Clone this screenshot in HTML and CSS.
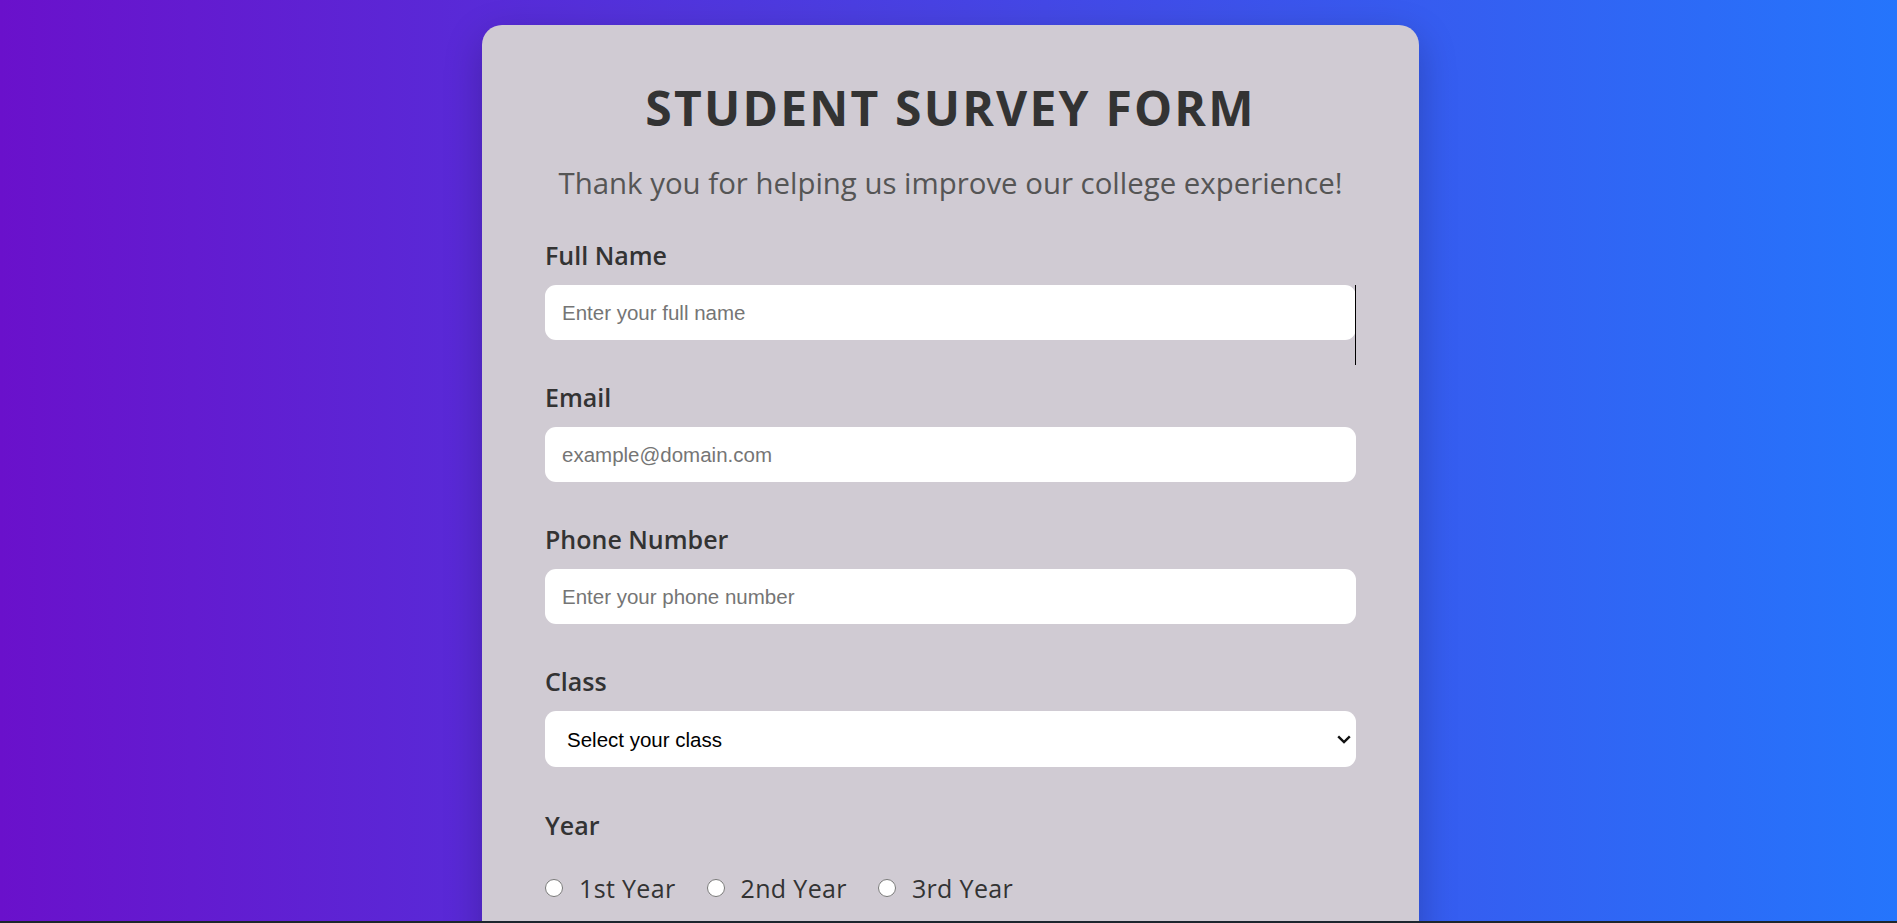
FILE: index.html
```html
<!DOCTYPE html>
<html lang="en">
<head>
<meta charset="UTF-8">
<title>Student Survey Form</title>
<link rel="stylesheet" href="styles.css">
</head>
<body>
<div class="page">
  <form class="card">
    <h1 class="title">STUDENT SURVEY FORM</h1>
    <p class="subtitle">Thank you for helping us improve our college experience!</p>

    <div class="field field-first">
      <label class="label" for="name">Full Name</label>
      <input class="control" id="name" type="text" placeholder="Enter your full name">
      <span class="resize-line"></span>
    </div>

    <div class="field">
      <label class="label" for="email">Email</label>
      <input class="control" id="email" type="email" placeholder="example@domain.com">
    </div>

    <div class="field">
      <label class="label" for="phone">Phone Number</label>
      <input class="control" id="phone" type="tel" placeholder="Enter your phone number">
    </div>

    <div class="field">
      <label class="label" for="class">Class</label>
      <div class="select-wrap">
        <select class="control select" id="class">
          <option>Select your class</option>
        </select>
        <svg class="chevron" width="14" height="9" viewBox="0 0 14 9" aria-hidden="true">
          <path d="M1.2 1.3 L7 7 L12.8 1.3" fill="none" stroke="#111" stroke-width="2.4"/>
        </svg>
      </div>
    </div>

    <div class="field field-year">
      <span class="label">Year</span>
      <div class="radios">
        <label class="radio"><input type="radio" name="year"><span>1st Year</span></label>
        <label class="radio"><input type="radio" name="year"><span>2nd Year</span></label>
        <label class="radio"><input type="radio" name="year"><span>3rd Year</span></label>
      </div>
    </div>
  </form>
</div>
<div class="bottom-edge"></div>
</body>
</html>
```

FILE: styles.css
```css
* { box-sizing: border-box; }

html, body {
  margin: 0;
  padding: 0;
}

body {
  height: 923px;
  background: linear-gradient(to right, #6a11cb, #2575fc);
  font-family: "Open Sans", "DejaVu Sans", sans-serif;
  color: #333;
  overflow: hidden;
}

.page {
  display: flex;
  justify-content: center;
  padding: 25px 0 0 4px;
}

.card {
  width: 937px;
  background: #d0cbd3;
  border-radius: 20px;
  padding: 52px 63px 60px;
  box-shadow: 0 12px 38px rgba(0, 0, 0, 0.22);
}

.title {
  margin: 0;
  text-align: center;
  font-size: 48px;
  line-height: 62px;
  font-weight: 700;
  letter-spacing: 2.2px;
  color: #333;
}

.subtitle {
  margin: 26px 0 0;
  text-align: center;
  font-size: 29.4px;
  line-height: 36px;
  font-weight: 400;
  color: #555;
}

.field {
  position: relative;
  display: flex;
  flex-direction: column;
  margin-top: 42px;
}

.field-first {
  margin-top: 39px;
}

.field-year {
  margin-top: 43px;
}

.label {
  display: block;
  font-size: 25px;
  line-height: 30px;
  font-weight: 600;
  color: #333;
  margin-bottom: 15px;
}

.control {
  display: block;
  width: 100%;
  height: 55px;
  border: none;
  border-radius: 11px;
  background: #fff;
  padding: 0 17px;
  font-family: "Liberation Sans", Arial, sans-serif;
  font-size: 20.5px;
  color: #000;
  outline: none;
}

.control::placeholder {
  color: #757575;
}

.select-wrap {
  position: relative;
}

.select {
  -webkit-appearance: none;
  appearance: none;
  height: 56px;
  padding-left: 22px;
  padding-right: 30px;
}

.chevron {
  position: absolute;
  right: 5px;
  top: 24px;
  pointer-events: none;
}

.resize-line {
  position: absolute;
  right: 0;
  top: 45px;
  width: 1px;
  height: 80px;
  background: #000;
}

.radios {
  display: flex;
  align-items: center;
  gap: 31px;
  margin-top: 18px;
}

.radio {
  display: flex;
  align-items: center;
  gap: 16px;
  font-size: 25px;
  line-height: 30px;
  font-weight: 400;
  letter-spacing: 0.35px;
  color: #333;
}

.radio input {
  width: 18px;
  height: 18px;
  margin: 0;
}

.bottom-edge {
  position: fixed;
  left: 0;
  right: 0;
  bottom: 0;
  height: 2px;
  background: #1d262e;
}
```
